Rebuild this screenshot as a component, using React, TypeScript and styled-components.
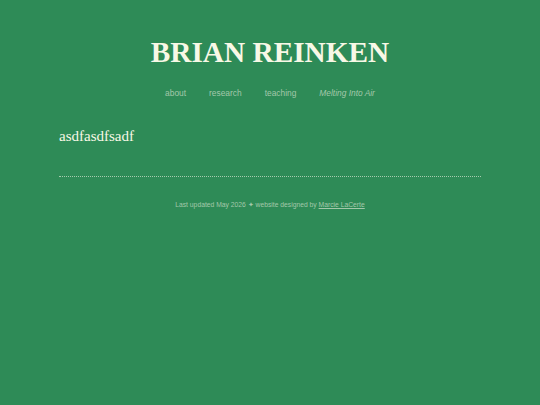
import React from "react";
import styled, { createGlobalStyle } from "styled-components";

const colors = {
    background: "#2e8b57",
    title: "#f8f8e6",
    nav: "#a3c8aa",
    rule: "#a6ccae",
};

const GlobalStyle = createGlobalStyle`
    html, body {
        margin: 0;
        padding: 0;
        background-color: ${colors.background};
    }
`;

const Page = styled.div`
    width: 422px;
    margin: 0 auto;
    padding-top: 34px;
`;

const Title = styled.h1`
    margin: 0;
    text-align: center;
    font-family: "Liberation Serif", "Times New Roman", serif;
    font-weight: bold;
    font-size: 29.3px;
    line-height: 36px;
    color: ${colors.title};
`;

const Nav = styled.nav`
    display: flex;
    justify-content: center;
    gap: 23px;
    margin-top: 17px;
`;

const NavLink = styled.a<{ $italic?: boolean }>`
    font-family: "Liberation Sans", Arial, sans-serif;
    font-size: 8.4px;
    line-height: 12px;
    color: ${colors.nav};
    font-style: ${(p) => (p.$italic ? "italic" : "normal")};
    text-decoration: none;
`;

const Content = styled.main`
    margin-top: 28px;
    padding-bottom: 31px;
    border-bottom: 1px dotted ${colors.rule};
`;

const Text = styled.p`
    margin: 0;
    font-family: "Liberation Serif", "Times New Roman", serif;
    font-size: 15px;
    line-height: 18px;
    color: ${colors.title};
`;

const Footer = styled.footer`
    margin-top: 23px;
    text-align: center;
    font-family: "Liberation Sans", Arial, sans-serif;
    font-size: 6.75px;
    line-height: 10px;
    color: ${colors.nav};
`;

const FooterLink = styled.a`
    color: ${colors.nav};
    text-decoration: underline;
`;

const App: React.FC = () => {
    return (
        <>
            <GlobalStyle />
            <Page>
                <Title>BRIAN REINKEN</Title>
                <Nav>
                    <NavLink>about</NavLink>
                    <NavLink>research</NavLink>
                    <NavLink>teaching</NavLink>
                    <NavLink $italic>Melting Into Air</NavLink>
                </Nav>
                <Content>
                    <Text>asdfasdfsadf</Text>
                </Content>
                <Footer>
                    Last updated May 2026 &#10022; website designed by{" "}
                    <FooterLink>Marcie LaCerte</FooterLink>
                </Footer>
            </Page>
        </>
    );
};

export default App;
